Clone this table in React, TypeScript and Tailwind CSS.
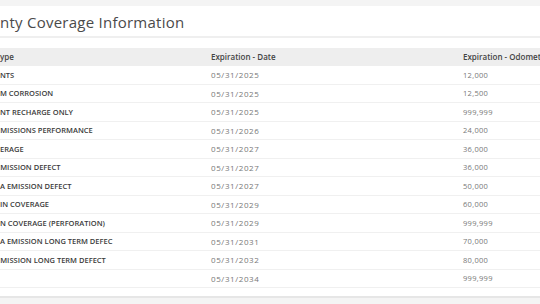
import React from "react";

const rows: [string, number, string, string][] = [
  ["NTS", 0, "05/31/2025", "12,000"],
  ["M CORROSION", 0, "05/31/2025", "12,500"],
  ["NT RECHARGE ONLY", 0, "05/31/2025", "999,999"],
  ["EMISSIONS PERFORMANCE", -4, "05/31/2026", "24,000"],
  ["ERAGE", 0, "05/31/2027", "36,000"],
  ["EMISSION DEFECT", -4, "05/31/2027", "36,000"],
  ["A EMISSION DEFECT", 0, "05/31/2027", "50,000"],
  ["IN COVERAGE", 0, "05/31/2029", "60,000"],
  ["N COVERAGE (PERFORATION)", 0, "05/31/2029", "999,999"],
  ["A EMISSION LONG TERM DEFEC", 0, "05/31/2031", "70,000"],
  ["EMISSION LONG TERM DEFECT", -4, "05/31/2032", "80,000"],
  ["", 0, "05/31/2034", "999,999"],
];

export default function App() {
  return (
    <div
      className="w-[540px] h-[304px] overflow-hidden bg-[#f4f4f4] pt-[6px]"
      style={{ fontFamily: '"Open Sans", "Liberation Sans", sans-serif' }}
    >
      <div className="bg-white h-[292px] border-b-2 border-[#e6e6e6]">
        <div className="h-[32px] flex items-center pt-[3px] border-b-2 border-[#efefef]">
          <h1 className="text-[15px] text-[#4a4a4a] font-normal tracking-[0.25px] whitespace-nowrap">
            nty Coverage Information
          </h1>
        </div>
        <div className="pt-[10px]">
          <div className="grid grid-cols-[205px_252px_83px] h-[18px] bg-[#eeeeee] text-[8px] font-semibold text-[#444] items-center whitespace-nowrap">
            <div>ype</div>
            <div className="pl-[6px]">Expiration - Date</div>
            <div className="pl-[6px] overflow-hidden">Expiration - Odometer</div>
          </div>
          {rows.map(([t, off, d, o], i) => (
            <div
              key={i}
              className="grid grid-cols-[205px_252px_83px] h-[18.5px] items-center border-b border-[#f0f0f0] text-[7.5px] whitespace-nowrap pt-[1px]"
            >
              <div className="font-semibold text-[#3a3a3a] overflow-hidden">
                <span className="inline-block" style={{ marginLeft: off }}>{t}</span>
              </div>
              <div className="pl-[6px] text-[#777] text-[8px] tracking-[0.6px]">{d}</div>
              <div className="pl-[6px] text-[#777] tracking-[0.3px]">{o}</div>
            </div>
          ))}
        </div>
      </div>
    </div>
  );
}
